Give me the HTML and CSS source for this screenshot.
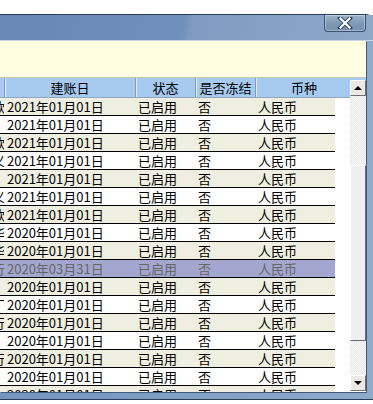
FILE: index.html
```html
<!DOCTYPE html>
<html lang="zh-CN">
<head>
  <meta charset="UTF-8" />
  <title>账户列表</title>
  <link rel="stylesheet" href="styles.css">
</head>
<body>

  <div class="window">
    <!-- Title bar -->
    <div class="titlebar">
      <button class="close-btn" title="关闭">
        <svg width="16" height="12" viewBox="0 0 16 12">
          <path d="M3 1 L13 11 M13 1 L3 11" stroke="#2c3e58" stroke-width="4" stroke-linecap="square"/>
          <path d="M3.5 1.5 L12.5 10.5 M12.5 1.5 L3.5 10.5" stroke="#ffffff" stroke-width="2.2" stroke-linecap="square"/>
        </svg>
      </button>
    </div>

    <div class="client">
      <div class="info-strip"></div>

      <!-- Account grid -->
      <div class="grid">
        <div class="grid-head">
          <div class="cell"></div>
          <div class="cell">建账日</div>
          <div class="cell">状态</div>
          <div class="cell">是否冻结</div>
          <div class="cell">币种</div>
        </div>

        <div class="row"><div class="clip"><span>款</span></div><div class="cell">2021年01月01日</div><div class="cell">已启用</div><div class="cell">否</div><div class="cell">人民币</div></div>
        <div class="row"><div class="clip"><span></span></div><div class="cell">2021年01月01日</div><div class="cell">已启用</div><div class="cell">否</div><div class="cell">人民币</div></div>
        <div class="row"><div class="clip"><span>款</span></div><div class="cell">2021年01月01日</div><div class="cell">已启用</div><div class="cell">否</div><div class="cell">人民币</div></div>
        <div class="row"><div class="clip"><span>义</span></div><div class="cell">2021年01月01日</div><div class="cell">已启用</div><div class="cell">否</div><div class="cell">人民币</div></div>
        <div class="row"><div class="clip"><span></span></div><div class="cell">2021年01月01日</div><div class="cell">已启用</div><div class="cell">否</div><div class="cell">人民币</div></div>
        <div class="row"><div class="clip"><span>义</span></div><div class="cell">2021年01月01日</div><div class="cell">已启用</div><div class="cell">否</div><div class="cell">人民币</div></div>
        <div class="row"><div class="clip"><span>款</span></div><div class="cell">2021年01月01日</div><div class="cell">已启用</div><div class="cell">否</div><div class="cell">人民币</div></div>
        <div class="row"><div class="clip"><span>华</span></div><div class="cell">2020年01月01日</div><div class="cell">已启用</div><div class="cell">否</div><div class="cell">人民币</div></div>
        <div class="row"><div class="clip"><span>华</span></div><div class="cell">2020年01月01日</div><div class="cell">已启用</div><div class="cell">否</div><div class="cell">人民币</div></div>
        <div class="row selected"><div class="clip"><span>行</span></div><div class="cell">2020年03月31日</div><div class="cell">已启用</div><div class="cell">否</div><div class="cell">人民币</div></div>
        <div class="row"><div class="clip"><span></span></div><div class="cell">2020年01月01日</div><div class="cell">已启用</div><div class="cell">否</div><div class="cell">人民币</div></div>
        <div class="row"><div class="clip"><span>厂</span></div><div class="cell">2020年01月01日</div><div class="cell">已启用</div><div class="cell">否</div><div class="cell">人民币</div></div>
        <div class="row"><div class="clip"><span>行</span></div><div class="cell">2020年01月01日</div><div class="cell">已启用</div><div class="cell">否</div><div class="cell">人民币</div></div>
        <div class="row"><div class="clip"><span></span></div><div class="cell">2020年01月01日</div><div class="cell">已启用</div><div class="cell">否</div><div class="cell">人民币</div></div>
        <div class="row"><div class="clip"><span>行</span></div><div class="cell">2020年01月01日</div><div class="cell">已启用</div><div class="cell">否</div><div class="cell">人民币</div></div>
        <div class="row"><div class="clip"><span>：</span></div><div class="cell">2020年01月01日</div><div class="cell">已启用</div><div class="cell">否</div><div class="cell">人民币</div></div>
        <div class="row"><div class="clip"><span></span></div><div class="cell">2020年01月01日</div><div class="cell">已启用</div><div class="cell">否</div><div class="cell">人民币</div></div>

        <!-- Vertical scrollbar (overlays the grid's right edge) -->
        <div class="scrollbar">
          <div class="sb-btn"><span class="arrow-up"></span></div>
          <div class="sb-track">
            <div class="sb-thumb"></div>
          </div>
          <div class="sb-btn"><span class="arrow-down"></span></div>
        </div>
      </div>
    </div>
  </div>

</body>
</html>
```

FILE: styles.css
```css
body {
  margin: 0;
  padding: 0;
  background: #ffffff;
  font-family: "Noto Sans CJK SC", "DejaVu Sans", sans-serif;
  font-size: 13px;
  color: #000;
  overflow: hidden;
}

.window {
  margin: 14px 0 0 -8px;
  width: 366px;
  padding: 0 7px 7px 7px;
  border: 1px solid #2a3c55;
  border-radius: 8px 8px 0 0;
  background: linear-gradient(to right, #7594bd, #8eaacb);
}

.titlebar {
  height: 25px;
  border-bottom: 1px solid #c9d7e6;
  display: flex;
  justify-content: flex-end;
  align-items: flex-start;
  background: linear-gradient(100deg, #6788b5 0%, #6f90bb 50%, #7e9bc1 52%, #8ea8c8 100%);
  margin: 0 -7px;
  padding: 0 7px;
}

.close-btn {
  width: 42px;
  height: 17px;
  padding: 0;
  border: 1px solid #3b5172;
  border-top: none;
  border-radius: 0 0 4px 4px;
  background: linear-gradient(#9fb3cb, #7f97b6 55%, #7690b1);
  box-shadow: inset 0 0 0 1px rgba(255,255,255,0.35);
  display: flex;
  align-items: center;
  justify-content: center;
}

.client {
  background: #ffffff;
  box-shadow: 1px 1px 0 #3d5b80;
}

.info-strip {
  height: 36px;
  background: #fffee3;
  border-bottom: 1px solid #c8c8b8;
}

.grid {
  position: relative;
  height: 314px;
  overflow: hidden;
}

.grid-head {
  display: grid;
  grid-template-columns: 4px 131px 60px 60px 97px;
  height: 19px;
  background: #a6caf0;
  border-bottom: 1px solid #8fa8c0;
}

.grid-head .cell {
  display: flex;
  align-items: center;
  justify-content: center;
  line-height: 19px;
  white-space: nowrap;
}

.grid-head .cell + .cell {
  border-left: 1px solid #7f9bb8;
  box-shadow: inset 1px 0 #dfeefc;
}

.row {
  display: grid;
  grid-template-columns: 4px 131px 60px 60px 80px;
  width: 335px;
  height: 17px;
  border-bottom: 1px solid #000;
  background: #ffffff;
}

/* the header is the first div, so data rows 1,3,5... are even */
.row:nth-of-type(even) {
  background: #eeeee1;
}

.row.selected {
  background: #a3a6cf;
  color: #666666;
}

.row .cell {
  padding-left: 3px;
  line-height: 17px;
  white-space: nowrap;
}

.clip {
  display: flex;
  justify-content: flex-end;
  overflow: hidden;
  line-height: 17px;
  white-space: nowrap;
}

.clip span {
  flex-shrink: 0;
  margin-right: -1px;
}

/* scrollbar */
.scrollbar {
  position: absolute;
  top: 2px;
  right: 0;
  width: 16px;
  height: 311px;
  display: flex;
  flex-direction: column;
}

.sb-btn {
  height: 16px;
  flex-shrink: 0;
  box-sizing: border-box;
  background: #ece9e4;
  border: 1px solid;
  border-color: #ffffff #6f6f6f #6f6f6f #ffffff;
  display: flex;
  align-items: center;
  justify-content: center;
}

.arrow-up {
  width: 0;
  height: 0;
  border-left: 4px solid transparent;
  border-right: 4px solid transparent;
  border-bottom: 4px solid #000;
}

.arrow-down {
  width: 0;
  height: 0;
  border-left: 4px solid transparent;
  border-right: 4px solid transparent;
  border-top: 4px solid #000;
}

.sb-track {
  flex: 1;
  background-color: #f6f6f6;
  background-image: repeating-conic-gradient(#e4e4e4 0 25%, #ffffff 0 50%);
  background-size: 2px 2px;
  padding-top: 69px;
}

.sb-thumb {
  height: 176px;
  box-sizing: border-box;
  background: #efeff1;
  border: 1px solid;
  border-color: #ffffff #6c6c6c #6c6c6c #ffffff;
}
```
